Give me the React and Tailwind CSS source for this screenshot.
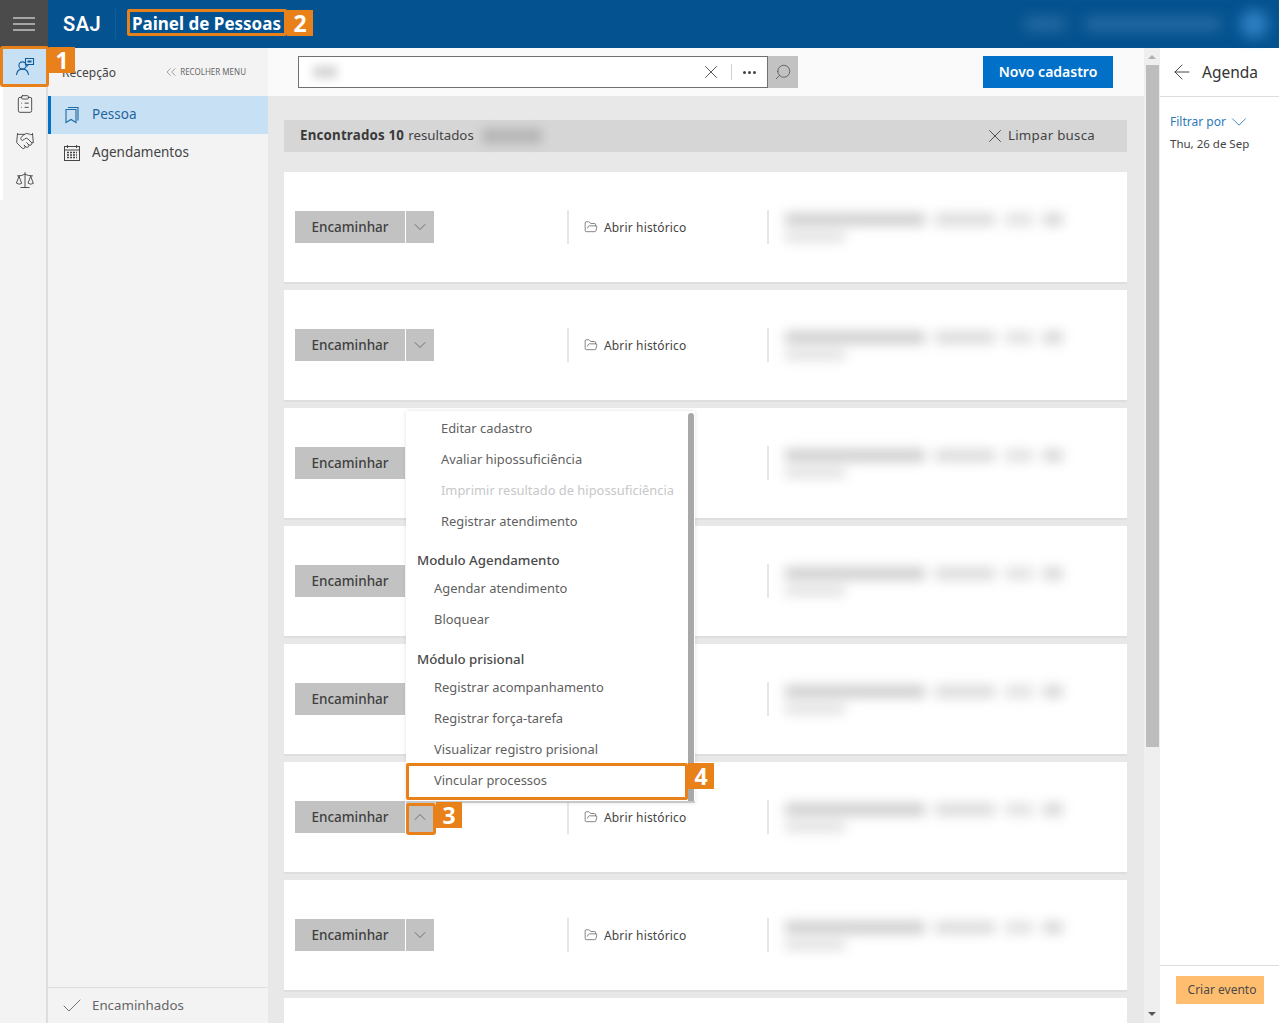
import React from "react";
import {
  ArrowLeft,
  Check,
  ChevronDown,
  ChevronUp,
  ChevronsLeft,
  ClipboardList,
  FolderOpen,
  Handshake,
  Scale,
  Search,
  X,
} from "lucide-react";

const rows = [0, 1, 2, 3, 4, 5, 6];

const MenuBars = () => (
  <svg width="22" height="14" viewBox="0 0 22 14" fill="none" stroke="#fff" strokeWidth="1.2">
    <path d="M0 1h22M0 7h22M0 13h22" />
  </svg>
);

const PersonIcon = () => (
  <svg width="20" height="20" viewBox="0 0 20 20" fill="none" stroke="#0f5c9c" strokeWidth="1.1">
    <circle cx="7.5" cy="8.5" r="3.6" />
    <path d="M1.5 18c.4-3.6 2.8-5.9 6-5.9s5.6 2.3 6 5.9" />
    <path d="M10.5 1.5h8v6h-5l-1.500 1.500v-1.500h-1.500z" />
    <path d="M12.500 4.500h4" strokeWidth="2" />
  </svg>
);

const BookmarkIcon = () => (
  <svg width="16" height="18" viewBox="0 0 16 18" fill="none" stroke="#1f6aa5" strokeWidth="1.1">
    <path d="M4 1.500h10v13" />
    <path d="M2 3.500h10v13l-5-3-5 3z" />
  </svg>
);

const CalendarIcon = () => (
  <svg width="18" height="18" viewBox="0 0 18 18" fill="none" stroke="#444" strokeWidth="1">
    <rect x="1.500" y="2.500" width="15" height="14" />
    <path d="M1.500 6h15M4.500 1v3M13.500 1v3" />
    <path d="M4 8.500h10M4 11h10M4 13.500h10" strokeWidth="1.500" strokeDasharray="2 1" />
  </svg>
);

const Note = ({ n, className }) => (
  <div
    className={`absolute flex h-[26px] w-[26px] items-center justify-center bg-[#e8811a] text-[23px] font-bold text-white ${className}`}
  >
    {n}
  </div>
);

const RowCard = ({ open }) => (
  <div className="flex h-[112px] shrink-0 items-center border-b-2 border-[#dedede] bg-white pl-[11px]">
    <div className="flex h-8 w-[272px] shrink-0 gap-px">
      <button className="h-8 w-[110px] bg-[#c2c2c2] text-[13.500px] font-medium text-[#3f3f3f]">
        Encaminhar
      </button>
      <button className="flex h-8 w-7 items-center justify-center bg-[#c2c2c2] text-[#555]">
        {open ? (
          <ChevronUp size={20} strokeWidth={0.9} />
        ) : (
          <ChevronDown size={20} strokeWidth={0.9} />
        )}
      </button>
    </div>
    <div className="flex h-[34px] w-[200px] shrink-0 items-center gap-[6px] border-l-2 border-[#e6e6e6] pl-[15px] text-xs tracking-[0.15px] text-[#444]">
      <FolderOpen size={14} strokeWidth={1.1} />
      <span className="mt-[2px]">Abrir histórico</span>
    </div>
    <div className="flex h-[34px] items-center border-l-2 border-[#e6e6e6] pl-4">
      <div className="flex flex-col gap-[6px] blur-[6px]">
        <div className="flex gap-[10px]">
          <div className="h-[13px] w-[140px] bg-[#cfcfcf]" />
          <div className="h-[13px] w-[60px] bg-[#dcdcdc]" />
          <div className="h-[13px] w-[28px] bg-[#e2e2e2]" />
          <div className="h-[13px] w-[20px] bg-[#d8d8d8]" />
        </div>
        <div className="h-[10px] w-[60px] bg-[#e0e0e0]" />
      </div>
    </div>
  </div>
);

const MenuItem = ({ children, indent = "pl-[35px]", disabled }) => (
  <div
    className={`flex h-[31px] items-center text-[12.900px] ${indent} ${
      disabled ? "text-[#c8c8c8]" : "text-[#5f5f5f]"
    }`}
  >
    {children}
  </div>
);

const MenuTitle = ({ children, className = "mt-3" }) => (
  <div
    className={`flex h-6 items-center pl-[11px] text-[13.300px] font-medium text-[#4a4a4a] ${className}`}
  >
    {children}
  </div>
);

const App = () => {
  return (
    <div
      className="relative flex h-[1023px] w-[1279px] flex-col overflow-hidden bg-white"
      style={{ fontFamily: '"Noto Sans", "Open Sans", sans-serif' }}
    >
      {/* Top bar */}
      <header className="flex h-12 shrink-0 items-center bg-[#04528f] text-white">
        <div className="flex h-12 w-12 items-center justify-center bg-[#4b4b4b]">
          <MenuBars />
        </div>
        <div className="ml-[15px] w-[52px] font-[Roboto] text-xl font-semibold tracking-[0.5px]">
          SAJ
        </div>
        <div className="h-[30px] w-px bg-[#0a6099]" />
        <div className="ml-4 text-[17px] leading-6 font-bold whitespace-nowrap">
          Painel de Pessoas
        </div>
        <div className="ml-auto flex items-center gap-5 pr-[11px] blur-[7px]">
          <div className="h-3 w-10 bg-[#2a6ea6]" />
          <div className="h-3 w-[135px] bg-[#2a6ea6]" />
          <div className="h-7 w-7 rounded-full bg-[#2f80c4]" />
        </div>
      </header>

      <div className="flex min-h-0 flex-1">
        {/* Icon rail */}
        <nav className="w-12 shrink-0 border-r-2 border-[#dddddd] bg-[#f3f3f3]">
          <div className="border-l-[3px] border-white text-[#444]">
            <div className="flex h-[37px] items-center justify-center bg-[#c7e0f4]">
              <PersonIcon />
            </div>
            <div className="flex h-[37px] items-center justify-center">
              <ClipboardList size={20} strokeWidth={1.1} />
            </div>
            <div className="flex h-[38px] items-center justify-center">
              <Handshake size={20} strokeWidth={1.1} />
            </div>
            <div className="flex h-[40px] items-center justify-center">
              <Scale size={20} strokeWidth={1.1} />
            </div>
          </div>
        </nav>

        {/* Side menu */}
        <aside className="flex w-[220px] shrink-0 flex-col bg-[#f3f3f3]">
          <div className="flex h-12 shrink-0 items-center justify-between pr-[22px] pl-[14px]">
            <span className="mt-0.5 text-xs text-[#444]">Recepção</span>
            <span className="flex items-center gap-px text-[8px] text-[#666]">
              <ChevronsLeft size={16} strokeWidth={0.9} />
              RECOLHER MENU
            </span>
          </div>
          <div className="flex h-[38px] items-center gap-[12px] border-l-[3px] border-[#0072c6] bg-[#c7e0f4] pb-px pl-[13px] text-[13.500px] text-[#22659e]">
            <BookmarkIcon />
            Pessoa
          </div>
          <div className="flex h-[38px] items-center gap-[11px] pb-px pl-[15px] text-[13.500px] text-[#444]">
            <CalendarIcon />
            Agendamentos
          </div>
          <div className="mt-auto flex h-9 items-center gap-2 border-t border-[#dddddd] pt-px pl-3 text-[13.300px] text-[#666]">
            <Check size={24} strokeWidth={0.9} />
            Encaminhados
          </div>
        </aside>

        {/* Main */}
        <main className="flex w-[876px] shrink-0 flex-col overflow-hidden bg-[#e8e8e8]">
          <div className="flex h-12 shrink-0 items-center justify-between bg-[#fafafa] pr-[31px] pl-[30px]">
            <div className="flex h-8">
              <div className="flex h-8 w-[470px] items-center border border-[#707070] bg-white pl-[14px]">
                <div className="h-3 w-6 bg-[#d4d4d4] blur-[5px]" />
                <X size={22} strokeWidth={0.9} className="ml-auto text-[#333]" />
                <div className="ml-[9px] h-4 w-px bg-[#d0d0d0]" />
                <div className="flex w-[35px] justify-center gap-[2px]">
                  <span className="h-[3px] w-[3px] rounded-full bg-[#444]" />
                  <span className="h-[3px] w-[3px] rounded-full bg-[#444]" />
                  <span className="h-[3px] w-[3px] rounded-full bg-[#444]" />
                </div>
              </div>
              <div className="flex h-8 w-[30px] items-center justify-center bg-[#c2c2c2] text-[#555]">
                <Search size={18} strokeWidth={1.1} className="-scale-x-100" />
              </div>
            </div>
            <button className="h-8 w-[130px] bg-[#0070c9] text-sm font-semibold text-white">
              Novo cadastro
            </button>
          </div>

          <div className="flex min-h-0 flex-col gap-[6px] pt-6 pr-[17px] pl-4">
            <div className="mb-[14px] flex h-8 shrink-0 items-center bg-[#d6d6d6] pr-8 pl-4 text-[13.300px] text-[#444]">
              <b className="font-bold tracking-[0.2px] text-[#3a3a3a]">Encontrados 10</b>
              <span className="ml-1">resultados</span>
              <div className="ml-2 h-4 w-[60px] bg-[#b8b8b8] blur-[5px]" />
              <X size={22} strokeWidth={0.9} className="ml-auto text-[#333]" />
              <span className="ml-[2px] tracking-[0.25px]">Limpar busca</span>
            </div>
            {rows.map((i) => (
              <RowCard key={i} open={i === 5} />
            ))}
            <div className="h-8 shrink-0 bg-white" />
          </div>
        </main>

        {/* Page scrollbar */}
        <div className="flex w-4 shrink-0 flex-col items-center bg-[#efefef]">
          <div className="mt-[7px] h-0 w-0 border-x-[4px] border-b-[4px] border-x-transparent border-b-[#b0b0b0]" />
          <div className="mt-[6px] h-[682px] w-[13px] bg-[#bdbdbd]" />
          <div className="mt-auto mb-[7px] h-0 w-0 border-x-[4px] border-t-[4px] border-x-transparent border-t-[#555]" />
        </div>

        {/* Agenda */}
        <aside className="flex min-w-0 flex-1 flex-col bg-white">
          <div className="flex h-[49px] shrink-0 items-center gap-2 border-b border-[#dddddd] pl-[10px] text-[15.500px] text-[#333]">
            <ArrowLeft size={24} strokeWidth={0.9} />
            <span className="mt-[2px]">Agenda</span>
          </div>
          <div className="pt-3 pl-[10px]">
            <div className="flex items-center text-xs text-[#2b7ab8]">
              Filtrar por
              <ChevronDown size={26} strokeWidth={0.8} />
            </div>
            <div className="text-[11.500px] text-[#444]">Thu, 26 de Sep</div>
          </div>
          <div className="mt-auto flex h-[58px] items-start border-t border-[#dddddd] pt-[10px] pl-4">
            <button className="h-7 w-[88px] bg-[#ffbe6f] pl-1 text-xs text-[#4a4a4a]">
              Criar evento
            </button>
          </div>
        </aside>
      </div>

      {/* Open dropdown over the cards */}
      <div className="absolute top-[411px] left-[406px] h-[392px] w-[289px] overflow-hidden border-b-2 border-[#c8c8c8] bg-white pt-[2px] pr-[7px] shadow-[0_0_4px_rgba(0,0,0,0.12)]">
        <MenuItem>Editar cadastro</MenuItem>
        <MenuItem>Avaliar hipossuficiência</MenuItem>
        <MenuItem disabled>Imprimir resultado de hipossuficiência</MenuItem>
        <MenuItem>Registrar atendimento</MenuItem>
        <MenuTitle>Modulo Agendamento</MenuTitle>
        <MenuItem indent="pl-7">Agendar atendimento</MenuItem>
        <MenuItem indent="pl-7">Bloquear</MenuItem>
        <MenuTitle className="mt-[13px]">Módulo prisional</MenuTitle>
        <MenuItem indent="pl-7">Registrar acompanhamento</MenuItem>
        <MenuItem indent="pl-7">Registrar força-tarefa</MenuItem>
        <MenuItem indent="pl-7">Visualizar registro prisional</MenuItem>
        <MenuItem indent="pl-7">Vincular processos</MenuItem>
        <div className="absolute top-[2px] right-px bottom-0 w-[6px] rounded-t-sm bg-[#a8a8a8]" />
      </div>

      {/* Tutorial callouts */}
      <div className="absolute top-[46px] left-0 h-[41px] w-[49px] rounded-[3px] border-[3px] border-[#e8811a]" />
      <Note n="1" className="top-[47px] left-[49px]" />
      <div className="absolute top-[9px] left-[127px] h-[27px] w-[160px] rounded-[2px] border-[3px] border-[#e8811a]" />
      <Note n="2" className="top-[10px] left-[287px]" />
      <div className="absolute top-[803px] left-[406px] h-8 w-[30px] rounded-[3px] border-[3px] border-[#e8811a]" />
      <Note n="3" className="top-[802px] left-[436px] w-[25px]" />
      <div className="absolute top-[763px] left-[406px] h-[37px] w-[282px] rounded-[2px] border-[3px] border-[#e8811a]" />
      <Note n="4" className="top-[763px] left-[688px] w-[25px]" />
    </div>
  );
};

export default App;
